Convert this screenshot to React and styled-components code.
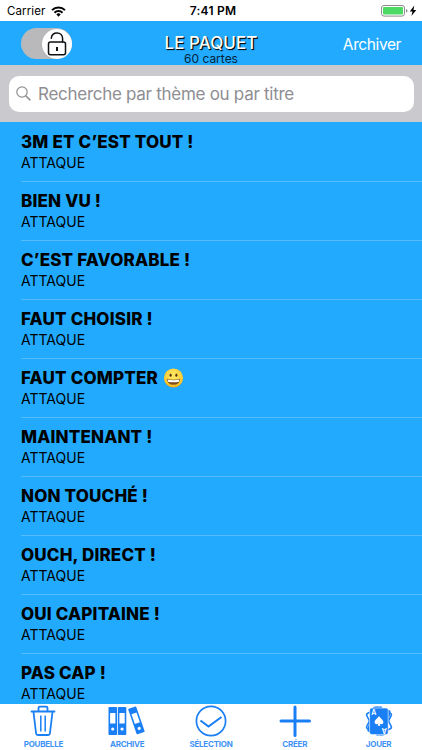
import React, {useState} from 'react';
import styled, {createGlobalStyle} from 'styled-components';

const GlobalStyle = createGlobalStyle`
  * {
    box-sizing: border-box;
    margin: 0;
    padding: 0;
  }
  body {
    background-color: #fff;
    font-family: Inter, "Liberation Sans", sans-serif;
    color: #000;
  }
  button {
    border: 0;
    background: none;
    font-family: inherit;
    cursor: pointer;
  }
  svg {
    display: block;
  }
`
const Screen = styled.div`
  display: flex;
  flex-direction: column;
  width: 422px;
  height: 750px;
  overflow: hidden;
  background-color: #22aaff;
`
const StatusBar = styled.header`
  flex: none;
  display: grid;
  grid-template-columns: 1fr auto 1fr;
  align-items: center;
  height: 21px;
  padding: 1px 5px 0 7px;
  background-color: #fff;
  font-size: 11.5px;
  line-height: 20px;
  strong {
    font-weight: 600;
    font-size: 12px;
    letter-spacing: 0.25px;
    padding-left: 2px;
  }
`
const StatusSide = styled.div`
  display: flex;
  align-items: center;
  justify-content: ${({$end}) => ($end ? 'flex-end' : 'flex-start')};
  gap: ${({$end}) => ($end ? '3px' : '6px')};
  letter-spacing: 0.1px;
`
const NavBar = styled.nav`
  flex: none;
  display: grid;
  grid-template-columns: 1fr auto 1fr;
  height: 44px;
  padding: 0 21px;
`
const Toggle = styled.button`
  align-self: start;
  display: flex;
  align-items: center;
  justify-content: ${({$on}) => ($on ? 'flex-end' : 'flex-start')};
  width: 51px;
  height: 31px;
  margin-top: 7px;
  border-radius: 16px;
  background-color: #b9b9bb;
`
const Knob = styled.span`
  display: flex;
  justify-content: center;
  align-items: center;
  width: 30px;
  height: 30px;
  border-radius: 50%;
  background-color: #fff;
`
const Heading = styled.div`
  text-align: center;
  h1 {
    margin-top: 14px;
    font-size: 17px;
    font-weight: 500;
    line-height: 17px;
    letter-spacing: 0.05px;
    color: #fff;
    text-shadow: 1px 1px 1px #000, 1px 1px 0 #00000099;
  }
  p {
    font-size: 12px;
    line-height: 14px;
    color: #04243a;
  }
`
const NavAction = styled.button`
  justify-self: end;
  align-self: start;
  margin-top: 12px;
  font-size: 15.5px;
  line-height: 23px;
  letter-spacing: -0.4px;
  color: #fff;
`
const SearchBar = styled.div`
  flex: none;
  height: 57px;
  padding: 10.5px 8.5px;
  background-color: #c9c9ce;
`
const SearchField = styled.label`
  display: flex;
  align-items: center;
  gap: 7px;
  height: 36.5px;
  padding-left: 7.5px;
  border-radius: 10px;
  background-color: #fff;
  input {
    flex: 1;
    border: 0;
    outline: 0;
    background: none;
    font-family: inherit;
    font-size: 17px;
    letter-spacing: -0.28px;
  }
  input::placeholder {
    color: #8e8e93;
    opacity: 1;
  }
`
const CardList = styled.ul`
  flex: 1;
  min-height: 0;
  overflow: hidden;
  padding: 1px 0 0 21px;
  list-style: none;
`
const CardRow = styled.li`
  height: 59px;
  padding-top: 8px;
  border-bottom: 1px solid #57bafa;
  h2 {
    display: flex;
    align-items: center;
    gap: 5px;
    font-size: 17px;
    font-weight: 800;
    line-height: 22px;
    letter-spacing: 0.18px;
  }
  p {
    font-size: 14px;
    line-height: 19px;
    letter-spacing: 0;
  }
`
const TabBar = styled.footer`
  flex: none;
  display: flex;
  height: 46px;
  padding: 0 1.5px;
  background-color: #fff;
`
const Tab = styled.button`
  flex: 1 1 0;
  display: flex;
  flex-direction: column;
  align-items: center;
  padding-top: 1px;
  color: #1a7ff5;
  span {
    font-size: 8px;
    font-weight: 700;
    line-height: 10px;
    margin-top: 2px;
    letter-spacing: -0.25px;
    opacity: 0.85;
  }
`

const WifiIcon = () => (
  <svg width="15" height="11" viewBox="0 0 15 11" fill="none" stroke="#000" strokeWidth="2">
    <path d="M1 4.1a9.3 9.3 0 0 1 13 0" />
    <path d="M3.5 6.7a5.7 5.7 0 0 1 8 0" />
    <path d="M5.4 8.4a3 3 0 0 1 4.2 0L7.5 10.7z" fill="#000" stroke="none" />
  </svg>
)

const BatteryIcon = () => (
  <svg width="36" height="12" viewBox="0 0 36 12">
    <rect x="0.5" y="0.5" width="23" height="10.6" rx="2.5" fill="#fff" stroke="#8d8d8d" />
    <rect x="2" y="2" width="20" height="7.6" rx="1" fill="#4cd964" />
    <path d="M25 4v3.6q1.5-.4 1.5-1.8T25 4z" fill="#8d8d8d" />
    <path d="M33.3.6 28.8 6.4h2.7L30.4 11l4.9-6h-2.8z" fill="#000" />
  </svg>
)

const LockIcon = () => (
  <svg width="20" height="24" viewBox="0 0 20 24" fill="none" stroke="#111" strokeWidth="1.5">
    <rect x="1.5" y="10" width="17" height="12.7" rx="2" />
    <path d="M4.3 6.2C4.6 3.1 6.8 1 10 1c3.4 0 5.6 2.3 5.6 5.5V10" strokeLinecap="round" />
    <path d="M10 15v4" strokeWidth="2" />
  </svg>
)

const SearchIcon = () => (
  <svg width="15" height="15" viewBox="0 0 15 15" fill="none" stroke="#8e8e93" strokeWidth="1.2">
    <circle cx="6" cy="6" r="5.2" />
    <path d="M9.7 9.7 14.4 14.4" strokeWidth="1.5" />
  </svg>
)

const GrinIcon = () => (
  <svg width="21" height="20" viewBox="0 0 20 20">
    <defs>
      <radialGradient id="grin" cx="0.5" cy="0.4" r="0.6">
        <stop offset="0.3" stopColor="#ffe45c" />
        <stop offset="0.8" stopColor="#fdc92f" />
        <stop offset="1" stopColor="#e9a21c" />
      </radialGradient>
    </defs>
    <circle cx="10" cy="10" r="9.6" fill="url(#grin)" />
    <ellipse cx="7.1" cy="7.2" rx="1.1" ry="1.6" fill="#5b3511" />
    <ellipse cx="12.9" cy="7.2" rx="1.1" ry="1.6" fill="#5b3511" />
    <path d="M3.3 10.8q6.7 1.7 13.4 0-.5 6-6.7 6t-6.7-6z" fill="#7b4a17" />
    <path d="M4 11.5q6 1.4 12 0l-.6 2.3q-5.4 1-10.8 0z" fill="#fff" />
  </svg>
)

const TrashIcon = () => (
  <svg width="32" height="32" viewBox="0 0 32 32" fill="none" stroke="currentColor" strokeWidth="1.8">
    <path d="M4.5 6.5h23M6.5 7l2.6 21.5q.2 1.5 1.7 1.5h10.4q1.5 0 1.7-1.5L25.5 7" strokeLinecap="round" />
    <path d="M11.5 6V3q0-1.3 1.3-1.3h6.4q1.3 0 1.3 1.3v3" />
    <path d="M13.8 10.5v16M18.2 10.5v16" strokeWidth="1.5" />
  </svg>
)

const Binder = ({x, turn}) => (
  <g transform={turn ? `translate(${x} 4) rotate(-19)` : `translate(${x} 2)`}>
    <rect width="8.5" height={turn ? 27 : 28} rx="0.8" fill="currentColor" />
    <rect x="1.6" y="6" width="5.3" height="10.5" fill="#fff" />
    <circle cx="4.25" cy="22" r="1.6" fill="#fff" />
  </g>
)

const BindersIcon = () => (
  <svg width="40" height="32" viewBox="0 0 40 32">
    <Binder x={1.5} />
    <Binder x={10.8} />
    <Binder x={21} turn />
  </svg>
)

const CheckIcon = () => (
  <svg width="32" height="32" viewBox="0 0 32 32" fill="none" stroke="currentColor">
    <circle cx="16" cy="16" r="14.6" strokeWidth="1.7" />
    <path d="M5.5 15.5 13.5 21.5 26.5 12" strokeWidth="2.1" />
  </svg>
)

const PlusIcon = () => (
  <svg width="32" height="32" viewBox="0 0 32 32" fill="none" stroke="currentColor" strokeWidth="3">
    <path d="M16 2v28.5M2 16h28.5" strokeLinecap="round" />
  </svg>
)

const CardsIcon = () => (
  <svg width="34" height="32" viewBox="0 0 34 32">
    <g fill="#fff" stroke="currentColor" strokeWidth="1.5">
      <rect x="8.5" y="4" width="17" height="24" rx="2" transform="rotate(-27 17 16)" />
      <rect x="8.5" y="4" width="17" height="24" rx="2" transform="rotate(27 17 16)" />
      <rect x="8.5" y="3.5" width="17" height="25" rx="2" transform="rotate(14 17 16)" fill="currentColor" />
    </g>
    <rect x="7.6" y="3" width="18.6" height="26.6" rx="2" fill="currentColor" stroke="#fff" strokeWidth="0.6" />
    <path d="M17 11c1 2.200 4.400 3.600 4.400 6.200 0 2.100-2.600 2.600-3.700 1.200l.7 2.400h-2.800l.7-2.400c-1.100 1.400-3.700.9-3.700-1.200 0-2.600 3.400-4 4.400-6.200z" fill="#fff" />
    <g fill="#fff" fontFamily="Inter, sans-serif" fontSize="7" fontWeight="600" textAnchor="middle">
      <text x="11.700" y="10">A</text>
      <text transform="translate(22.200 22.600) rotate(180)">A</text>
    </g>
  </svg>
)

const cards = [
  '3M ET C’EST TOUT !',
  'BIEN VU !',
  'C’EST FAVORABLE !',
  'FAUT CHOISIR !',
  'FAUT COMPTER',
  'MAINTENANT !',
  'NON TOUCHÉ !',
  'OUCH, DIRECT !',
  'OUI CAPITAINE !',
  'PAS CAP !',
].map((title, id) => ({id, title, theme: 'ATTAQUE', grin: title === 'FAUT COMPTER'}));

const tabs = [
  {label: 'POUBELLE', Icon: TrashIcon},
  {label: 'ARCHIVE', Icon: BindersIcon},
  {label: 'SÉLECTION', Icon: CheckIcon},
  {label: 'CRÉER', Icon: PlusIcon},
  {label: 'JOUER', Icon: CardsIcon},
];

const App = () => {
  const [unlocked, setUnlocked] = useState(true);
  const [search, setSearch] = useState('');
  const shown = cards.filter((card) => (card.title + card.theme).toLowerCase().includes(search.toLowerCase()));
  return (
    <>
      <GlobalStyle />
      <Screen>
        <StatusBar>
          <StatusSide>Carrier <WifiIcon /></StatusSide>
          <strong>7:41 PM</strong>
          <StatusSide $end><BatteryIcon /></StatusSide>
        </StatusBar>
        <NavBar>
          <Toggle $on={unlocked} onClick={() => setUnlocked(!unlocked)}>
            <Knob><LockIcon /></Knob>
          </Toggle>
          <Heading>
            <h1>LE PAQUET</h1>
            <p>60 cartes</p>
          </Heading>
          <NavAction>Archiver</NavAction>
        </NavBar>
        <SearchBar>
          <SearchField>
            <SearchIcon />
            <input
              value={search}
              onChange={(e) => setSearch(e.target.value)}
              placeholder="Recherche par thème ou par titre"
            />
          </SearchField>
        </SearchBar>
        <CardList>
          {shown.map((card) => (
            <CardRow key={card.id}>
              <h2>{card.title}{card.grin ? <GrinIcon /> : null}</h2>
              <p>{card.theme}</p>
            </CardRow>
          ))}
        </CardList>
        <TabBar>
          {tabs.map(({label, Icon}) => (
            <Tab key={label}>
              <Icon />
              <span>{label}</span>
            </Tab>
          ))}
        </TabBar>
      </Screen>
    </>
  )
}

export default App;
